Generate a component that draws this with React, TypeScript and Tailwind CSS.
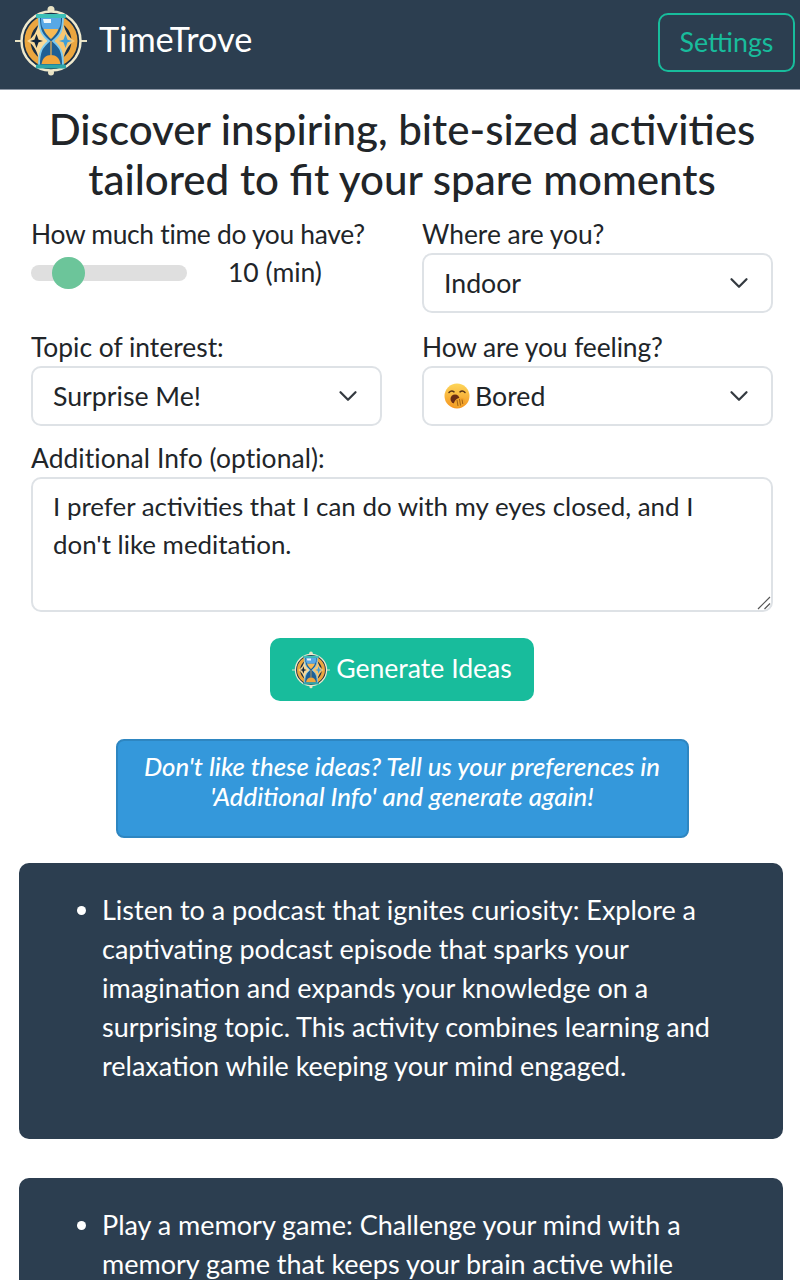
import type { JSX, ReactNode } from "react";

// hourglass logo, drawn by hand since there's no image file
function Logo({ size }: { readonly size: number }): JSX.Element {
    return (
        <svg width={size} height={size} viewBox="0 0 72 72" className="shrink-0">
            <circle cx="36" cy="4.500" r="3.500" fill="#e8e2c4" />
            <circle cx="36" cy="67.500" r="3" fill="#e8e2c4" />
            <path d="M0 36h8M64 36h8" stroke="#e8e2c4" strokeWidth="1.800" />
            <circle cx="36" cy="36" r="29.500" fill="#1a2f45" stroke="#efe9cd" strokeWidth="2.500" />
            <circle cx="36" cy="36" r="23.500" fill="none" stroke="#eba63f" strokeWidth="6" />
            <path d="M12 36c6-3 10-9 12-19l9 19-9 19c-2-10-6-16-12-19z" fill="#f8d999" />
            <path d="M60 36c-6-3-10-9-12-19l-9 19 9 19c2-10 6-16 12-19z" fill="#f5c673" />
            <path d="M21.500 29l2.500 7-2.500 7-2.500-7zM15 36l6.500-2 6.500 2-6.500 2z" fill="#12263c" />
            <path d="M50.500 29l2.500 7-2.500 7-2.500-7zM44 36l6.500-2 6.500 2-6.500 2z" fill="#3f9fd8" />
            <path d="M24 11h24c0 15-3 19-10 25 7 6 10 10 10 25H24c0-15 3-19 10-25-7-6-10-10-10-25z" fill="#1f5f94" stroke="#7ccaf0" strokeWidth="1.800" />
            <path d="M26 13h20c0 7-1 9-2.500 11h-15C27 22 26 20 26 13z" fill="#58a8e6" />
            <path d="M28 14h8v4h-7z" fill="#eef7fc" />
            <path d="M28.500 24h15c-2 5-4.500 7-7.500 10-3-3-5.500-5-7.500-10z" fill="#f6b954" />
            <path d="M26.500 59c1-6 4.500-9 9.500-9s8.500 3 9.500 9z" fill="#f2a63c" />
            <path d="M35.400 36h1.200v14h-1.200z" fill="#f4b34f" />
            <rect x="21" y="9" width="30" height="4" rx="1" fill="#3ec0b8" />
            <rect x="21" y="59.500" width="30" height="4" rx="1" fill="#2fa6a8" />
        </svg>
    );
}

function YawnEmoji(): JSX.Element {
    return (
        <svg width="26" height="26" viewBox="0 0 26 26" className="shrink-0">
            <defs>
                <linearGradient id="yawn" x1="0" y1="0" x2="0" y2="1">
                    <stop offset="0" stopColor="#fdd65a" />
                    <stop offset="1" stopColor="#f5951f" />
                </linearGradient>
            </defs>
            <circle cx="13" cy="13" r="12.500" fill="url(#yawn)" />
            <path d="M5 9.500c1.500-1.600 3.500-1.800 5-.6M21 9.500c-1.500-1.600-3.500-1.800-5-.6" fill="none" stroke="#5a3416" strokeWidth="1.500" strokeLinecap="round" />
            <ellipse cx="11" cy="16" rx="4.500" ry="4.500" fill="#6b2c14" />
            <path d="M10 24c-1-4 1-8 5-9 3-.8 6 .5 6 3 0 3-3 6-7 6.500z" fill="#f2a52c" />
            <path d="M13 17l1 6M15.500 16l1 6.500M18 16.500l.8 4.500" stroke="#9a5a12" strokeWidth="0.900" />
        </svg>
    );
}

function Chevron(): JSX.Element {
    return (
        <svg width="24" height="24" viewBox="0 0 16 16" fill="none" className="shrink-0">
            <path d="m3 5.500 5 5 5-5" stroke="#343a40" strokeWidth="1.500" strokeLinecap="round" strokeLinejoin="round" />
        </svg>
    );
}

function Label({ children, className = "" }: { readonly children: ReactNode; readonly className?: string }): JSX.Element {
    return <div className={`h-[39px] text-[26.400px] leading-[41px] text-[#212529] ${className}`}>{children}</div>;
}

function Select({ children }: { readonly children: ReactNode }): JSX.Element {
    return (
        <div className="flex h-[60px] items-center justify-between rounded-[10px] border-2 border-[#dee2e6] bg-white pl-[20px] pr-[20px] text-[26.700px] text-[#212529]">
            <span className="flex items-center gap-[5px]">{children}</span>
            <Chevron />
        </div>
    );
}

const ideas = [
    "Listen to a podcast that ignites curiosity: Explore a captivating podcast episode that sparks your imagination and expands your knowledge on a surprising topic. This activity combines learning and relaxation while keeping your mind engaged.",
    "Play a memory game: Challenge your mind with a memory game that keeps your brain active while having fun and stimulating your imagination along the way without opening your eyes at all.",
];

export default function App(): JSX.Element {
    return (
        <div className="h-[1280px] overflow-hidden bg-white font-['Lato','Noto_Sans',sans-serif] text-[#212529]">
            <header className="flex h-[90px] items-start justify-between border-b border-[#8f98a6] bg-[#2c3e50] pl-[15px] pr-[5px]">
                <div className="flex items-center gap-[12px] pt-[5px]">
                    <Logo size={72} />
                    <span className="-translate-y-[2px] text-[34.300px] leading-[72px] text-white">TimeTrove</span>
                </div>
                <button className="mt-[13px] h-[59px] w-[137px] rounded-[10px] border-2 border-[#18bc9c] text-[26.800px] text-[#18bc9c]">
                    Settings
                </button>
            </header>

            <main className="flex flex-col items-center pl-[4px]">
                <h1 className="mt-[14px] text-center text-[42.100px] leading-[50px] font-medium text-[#212529]">
                    Discover inspiring, bite-sized activities
                    <br />
                    tailored to fit your spare moments
                </h1>

                <div className="mt-[10px] grid w-[742px] grid-cols-2 gap-x-[40px]">
                    <div className="h-[113px]">
                        <Label className="tracking-[-0.3px]">How much time do you have?</Label>
                        <div className="flex items-center">
                            <div className="relative h-[16px] w-[156px] rounded-full bg-[#dfdfdf]">
                                <div className="absolute top-[-8px] left-[21px] h-[32px] w-[33px] rounded-full bg-[#6cc59a]" />
                            </div>
                            <span className="ml-[41px] text-[26.500px] leading-[39px]">10 (min)</span>
                        </div>
                    </div>
                    <div className="h-[113px]">
                        <Label>Where are you?</Label>
                        <Select>Indoor</Select>
                    </div>
                    <div className="h-[111px]">
                        <Label>Topic of interest:</Label>
                        <Select>Surprise Me!</Select>
                    </div>
                    <div className="h-[111px]">
                        <Label className="tracking-[-0.1px]">How are you feeling?</Label>
                        <Select>
                            <YawnEmoji />
                            Bored
                        </Select>
                    </div>
                </div>

                <div className="w-[742px]">
                    <Label className="tracking-[0.08px]">Additional Info (optional):</Label>
                    <div className="relative">
                        <textarea
                            readOnly
                            value="I prefer activities that I can do with my eyes closed, and I don't like meditation."
                            className="block h-[135px] w-full resize-none rounded-[10px] border-2 border-[#dee2e6] bg-white px-[20px] py-[8px] text-[25.900px] leading-[38px] text-[#212529] outline-none"
                        />
                        <svg width="14" height="14" viewBox="0 0 14 14" className="absolute right-[2px] bottom-[2px]">
                            <path d="M1 13 13 1M7.500 13 13 7.500" stroke="#555" strokeWidth="1.200" />
                        </svg>
                    </div>
                </div>

                <button className="mt-[26px] flex h-[63px] w-[264px] items-center justify-center gap-[6px] rounded-[10px] bg-[#18bc9c] text-[26.600px] text-white">
                    <Logo size={38} />
                    <span className="-translate-y-[1px]">Generate Ideas</span>
                </button>

                <div className="mt-[38px] flex h-[99px] w-[573px] flex-col items-center rounded-[8px] border-2 border-[#2e86c1] bg-[#3498db] pt-[10px] text-center text-[25.800px] leading-[30px] font-medium text-white italic">
                    <span>Don't like these ideas? Tell us your preferences in</span>
                    <span>'Additional Info' and generate again!</span>
                </div>

                <div className="mt-[25px] mr-[2px] flex w-[764px] flex-col gap-[39px]">
                    {ideas.map((idea) => (
                        <div key={idea} className="h-[276px] shrink-0 rounded-[10px] bg-[#2c3e50] pt-[27px] pr-[40px] pl-[83px] text-white">
                            <ul className="list-disc text-[27px] leading-[39px]">
                                <li>{idea}</li>
                            </ul>
                        </div>
                    ))}
                </div>
            </main>
        </div>
    );
}
